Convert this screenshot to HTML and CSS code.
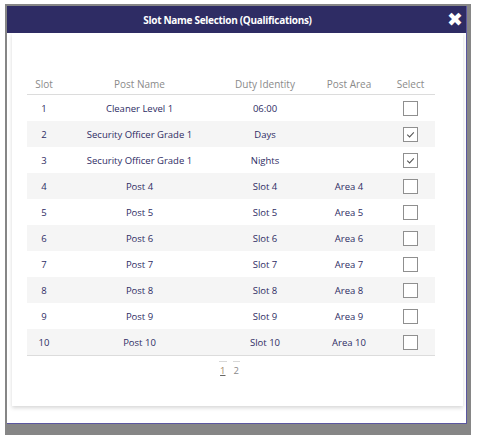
FILE: index.html
```html
<!DOCTYPE html>
<html>
<head>
<meta charset="utf-8">
<link rel="stylesheet" href="styles.css">
</head>
<body>
<div class="window">
  <div class="dialog">
    <div class="titlebar">
      <span class="title">Slot Name Selection (Qualifications)</span>
      <span class="close">&#10006;</span>
    </div>
    <div class="body">
      <div class="card">
        <table class="grid">
          <thead>
            <tr><th class="c-slot">Slot</th><th class="c-name">Post Name</th><th class="c-duty">Duty Identity</th><th class="c-area">Post Area</th><th class="c-sel">Select</th></tr>
          </thead>
          <tbody>
            <tr><td>1</td><td>Cleaner Level 1</td><td>06:00</td><td></td><td><span class="cb"></span></td></tr>
            <tr><td>2</td><td>Security Officer Grade 1</td><td>Days</td><td></td><td><span class="cb"><svg viewBox="0 0 14 14"><path d="M3.5 7.2 L6 9.6 L10.6 4.8" fill="none" stroke="#555" stroke-width="1.1"/></svg></span></td></tr>
            <tr><td>3</td><td>Security Officer Grade 1</td><td>Nights</td><td></td><td><span class="cb"><svg viewBox="0 0 14 14"><path d="M3.5 7.2 L6 9.6 L10.6 4.8" fill="none" stroke="#555" stroke-width="1.1"/></svg></span></td></tr>
            <tr><td>4</td><td>Post 4</td><td>Slot 4</td><td>Area 4</td><td><span class="cb"></span></td></tr>
            <tr><td>5</td><td>Post 5</td><td>Slot 5</td><td>Area 5</td><td><span class="cb"></span></td></tr>
            <tr><td>6</td><td>Post 6</td><td>Slot 6</td><td>Area 6</td><td><span class="cb"></span></td></tr>
            <tr><td>7</td><td>Post 7</td><td>Slot 7</td><td>Area 7</td><td><span class="cb"></span></td></tr>
            <tr><td>8</td><td>Post 8</td><td>Slot 8</td><td>Area 8</td><td><span class="cb"></span></td></tr>
            <tr><td>9</td><td>Post 9</td><td>Slot 9</td><td>Area 9</td><td><span class="cb"></span></td></tr>
            <tr><td>10</td><td>Post 10</td><td>Slot 10</td><td>Area 10</td><td><span class="cb"></span></td></tr>
          </tbody>
        </table>
        <div class="pager">
          <span class="page current">1</span>
          <span class="page">2</span>
        </div>
      </div>
    </div>
  </div>
</div>
</body>
</html>
```
FILE: styles.css
```css
html, body {
  margin: 0;
  padding: 0;
  background: #ffffff;
  font-family: "Open Sans", "Noto Sans", sans-serif;
}
.window {
  margin: 4px 0 0 5px;
  width: 466px;
  height: 431px;
  box-sizing: border-box;
  background: #868686;
  padding: 2px 4px 11px 2px;
}
.dialog {
  background: #ffffff;
  border-right: 1px solid #5b57a0;
  border-bottom: 1px solid #5b57a0;
  height: 100%;
  box-sizing: border-box;
  display: flex;
  flex-direction: column;
}
.titlebar {
  height: 27px;
  background: #2e2c64;
  position: relative;
  display: flex;
  align-items: center;
  justify-content: center;
  padding-right: 18px;
}
.title {
  color: #ffffff;
  font-weight: 700;
  font-size: 10px;
  letter-spacing: -0.3px;
}
.close {
  position: absolute;
  right: 3px;
  top: 3px;
  color: #ffffff;
  font-size: 19px;
  line-height: 20px;
  font-family: "DejaVu Sans", sans-serif;
  font-weight: 700;
}
.body {
  flex: 1;
  padding: 0 3px 17px 5px;
  background: #ffffff;
}
.card {
  height: 100%;
  box-sizing: border-box;
  background: #ffffff;
  box-shadow: 0 2px 4px rgba(0,0,0,0.16);
  padding: 38px 27px 0 15px;
}
.grid {
  width: 408px;
  border-collapse: collapse;
  table-layout: fixed;
  font-size: 9.5px;
}
.grid th {
  color: #8a8a8a;
  font-weight: 400;
  font-size: 10px;
  height: 21px;
  padding: 2px 0 0;
  border-bottom: 1px solid #dcdcdc;
  text-align: center;
}
.c-slot { width: 34px; }
.c-name { width: 157px; }
.c-duty { width: 94px; }
.c-area { width: 74px; }
.c-sel { width: 49px; }
.grid td {
  height: 26px;
  padding: 0;
  text-align: center;
  color: #2e2c64;
  vertical-align: middle;
}
.grid tbody tr:nth-child(even) td {
  background: #f5f5f5;
}
.grid tbody tr:last-child td {
  border-bottom: 1px solid #dcdcdc;
}
.cb {
  display: inline-block;
  width: 13px;
  height: 13px;
  border: 1px solid #8f8f8f;
  background: #ffffff;
  vertical-align: middle;
}
.cb svg {
  display: block;
  width: 13px;
  height: 13px;
}
.pager {
  display: flex;
  justify-content: center;
  gap: 6px;
  margin-top: 5px;
  padding-right: 4px;
}
.page {
  font-size: 9.5px;
  color: #8a8a8a;
  border-top: 1px solid #d8d8d8;
  padding: 2px 1px 0;
  line-height: 14px;
}
.page.current {
  color: #a38a6a;
  text-decoration: underline;
  text-decoration-color: #666;
}
```
